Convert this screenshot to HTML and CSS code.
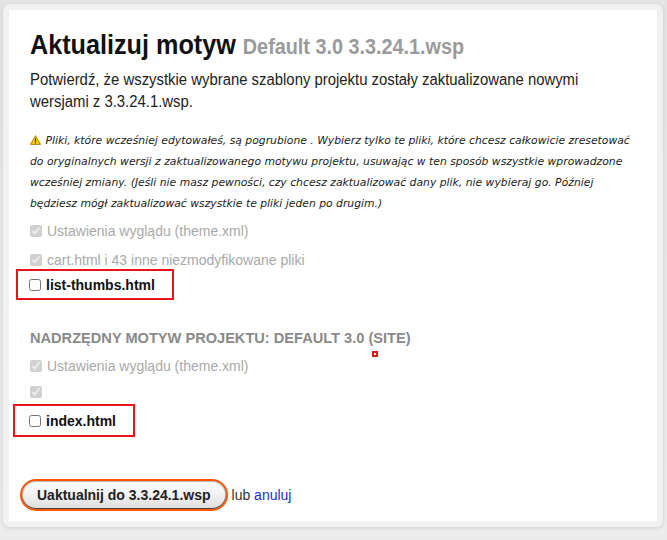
FILE: index.html
```html
<!DOCTYPE html>
<html lang="pl">
<head>
    <meta charset="UTF-8">
    <title>Aktualizuj motyw</title>
    <link rel="stylesheet" href="styles.css">
</head>
<body>
    <div class="dialog">
        <div class="dialog-inner">
            <h1><span class="narrow">Aktualizuj motyw <span class="version">Default 3.0 3.3.24.1.wsp</span></span></h1>
            <p class="intro"><span class="narrow">Potwierdź, że wszystkie wybrane szablony projektu zostały zaktualizowane nowymi<br>wersjami z 3.3.24.1.wsp.</span></p>

            <p class="warning">
                <svg class="warn-icon" width="11" height="10" viewBox="0 0 11 10">
                    <path d="M5.5 0.6 L10.5 9.4 L0.5 9.4 Z" fill="#f5c400" stroke="#b07a00" stroke-width="0.9" stroke-linejoin="round"/>
                    <rect x="5" y="3.2" width="1" height="3.4" fill="#222"/>
                    <rect x="5" y="7.3" width="1" height="1" fill="#222"/>
                </svg>
                Pliki, które wcześniej edytowałeś, są pogrubione . Wybierz tylko te pliki, które chcesz całkowicie zresetować do oryginalnych wersji z zaktualizowanego motywu projektu, usuwając w ten sposób wszystkie wprowadzone wcześniej zmiany. (Jeśli nie masz pewności, czy chcesz zaktualizować dany plik, nie wybieraj go. Później będziesz mógł zaktualizować wszystkie te pliki jeden po drugim.)
            </p>

            <div class="files">
                <label class="file disabled"><input type="checkbox" checked disabled> Ustawienia wyglądu (theme.xml)</label>
                <label class="file disabled"><input type="checkbox" checked disabled> cart.html i 43 inne niezmodyfikowane pliki</label>
                <label class="file modified first-mark"><input type="checkbox"> list-thumbs.html</label>
            </div>

            <h3 class="parent-title">Nadrzędny motyw projektu: Default 3.0 (site)</h3>
            <div class="files parent-files">
                <label class="file disabled"><input type="checkbox" checked disabled> Ustawienia wyglądu (theme.xml)</label>
                <label class="file disabled"><input type="checkbox" checked disabled></label>
                <label class="file modified second-mark"><input type="checkbox"> index.html</label>
            </div>

            <div class="actions">
                <button type="button" class="update-btn">Uaktualnij do 3.3.24.1.wsp</button>
                <span class="or">lub <a href="#">anuluj</a></span>
            </div>

            <span class="marker"></span>
        </div>
    </div>
</body>
</html>
```

FILE: styles.css
```css
html, body {
    margin: 0;
    padding: 0;
}
body {
    background: linear-gradient(180deg, #e4e4e4 0%, #ececec 100%);
    height: 540px;
    padding: 4px 4px 0 3px;
    box-sizing: border-box;
    font-family: "Liberation Sans", Arial, sans-serif;
}
.dialog {
    background: #f1f1f1;
    border-radius: 7px;
    padding: 6px;
    box-shadow: 0 1px 4px rgba(0,0,0,0.12);
}
.dialog-inner {
    position: relative;
    background: white;
    padding: 17px 21px 10px 21px;
    height: 511px;
    box-sizing: border-box;
}
/* no narrow font installed: squeeze the regular one */
.narrow {
    display: inline-block;
    transform-origin: left center;
    white-space: nowrap;
}
h1 {
    margin: 0;
    font-weight: bold;
    font-size: 28px;
    line-height: 36px;
    color: #111;
}
h1 .narrow {
    transform: scaleX(0.9);
}
.version {
    font-size: 22px;
    color: #9a9a9a;
}
.intro {
    margin: 4px 0 0 0;
    font-size: 16px;
    line-height: 22px;
    color: #222;
}
.intro .narrow {
    transform: scaleX(0.93);
}
.warning {
    margin: 17px 0 0 0;
    font-family: "DejaVu Sans", Verdana, sans-serif;
    font-style: italic;
    font-size: 10.8px;
    line-height: 21px;
    color: #222;
}
.warn-icon {
    vertical-align: -1px;
    margin-right: 1px;
}
.files {
    display: flex;
    flex-direction: column;
    align-items: flex-start;
    margin-top: 2px;
}
.file {
    display: flex;
    align-items: center;
    height: 29px;
    font-size: 14px;
    color: #222;
}
.parent-files {
    margin-top: 3px;
}
.parent-files .file {
    height: 26px;
}
.file input {
    margin: 0 5px 0 0;
    width: 12px;
    height: 12px;
}
.file.disabled {
    color: #a9a9a9;
}
.file.modified {
    font-weight: bold;
    color: #111;
    border: 2px solid #e8141b;
    box-sizing: border-box;
}
.files .first-mark {
    height: 31px;
    margin-top: -5px;
    margin-left: -14px;
    padding: 0 14px 0 11px;
    width: 158px;
}
.files .second-mark {
    height: 33px;
    margin-top: -1px;
    margin-left: -17px;
    padding: 0 14px;
    width: 122px;
}
.parent-title {
    margin: 26px 0 0 0;
    font-size: 14.6px;
    line-height: 24px;
    text-transform: uppercase;
    font-weight: bold;
    color: #8a8a8a;
}
.actions {
    display: flex;
    align-items: center;
    margin-top: 42px;
    margin-left: -10px;
}
.update-btn {
    font-family: "Liberation Sans", Arial, sans-serif;
    font-weight: bold;
    font-size: 14px;
    color: #222;
    padding: 0 15px;
    height: 32px;
    border: 2px solid #ff5400;
    border-radius: 16px;
    background: linear-gradient(180deg, #ffffff 0%, #f2f2f2 50%, #dcdcdc 100%);
    box-shadow: inset 0 -1px 0 #444, inset 0 0 0 1px #bbb;
    cursor: pointer;
}
.or {
    margin-left: 4px;
    font-size: 14px;
    color: #333;
}
.or a {
    color: #1530c8;
    text-decoration: none;
}
.marker {
    position: absolute;
    left: 363px;
    top: 341px;
    width: 2px;
    height: 2px;
    border: 2px solid #e8141b;
}
```
